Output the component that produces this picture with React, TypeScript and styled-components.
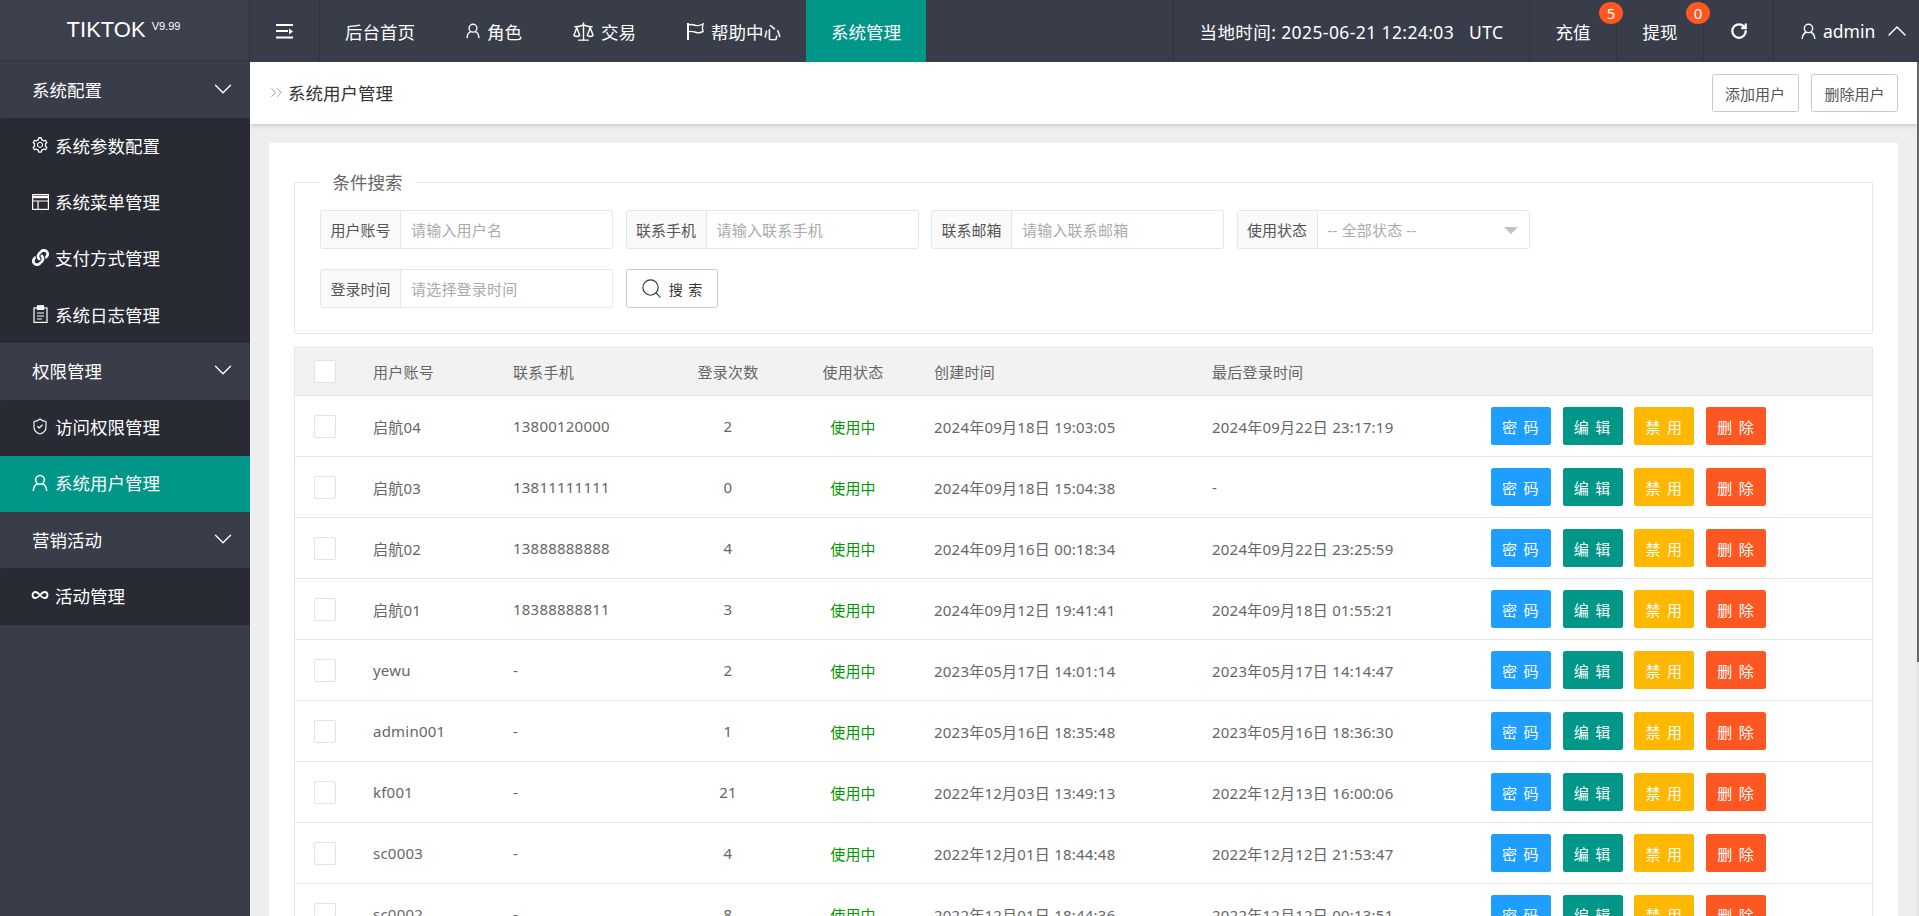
import styled, { createGlobalStyle } from "styled-components";
import { ChevronDown, ChevronUp, ChevronsRight, Infinity as InfinityIcon, RotateCw, Scale, Search, ShieldCheck } from "lucide-react";
import { AiOutlineSetting } from "react-icons/ai";
import { FaLink } from "react-icons/fa";
import type { ReactNode } from "react";

const GlobalStyle = createGlobalStyle`
  html, body { margin: 0; padding: 0; height: 100%; overflow: hidden; }
  body { font-family: "Noto Sans", "Noto Sans CJK SC", sans-serif; font-size: 15px; color: #666; }
  #root { height: 100%; }
  * { box-sizing: border-box; }
`;

const Page = styled.div`
  display: grid;
  grid-template-rows: 62px 1fr;
  height: 916px;
  overflow: hidden;
`;

const Header = styled.header`
  display: flex;
  background: #393d49;
  color: #fff;
  font-size: 17.5px;
`;

const Logo = styled.div`
  width: 250px;
  height: 61px;
  flex: none;
  display: flex;
  justify-content: center;
  padding-right: 2px;
  gap: 6px;
  align-items: center;
  background: #3c404d;
  border-right: 1px solid #2f333e;
  border-bottom: 1px solid #2f333e;
  font-size: 22px;
  font-family: "Liberation Sans", sans-serif;
`;

const LogoVersion = styled.sup`
  font-size: 11px;
  margin-top: -8px;
  line-height: 1;
  vertical-align: top;
`;

const Toggle = styled.div`
  width: 70px;
  flex: none;
  display: flex;
  align-items: center;
  justify-content: center;
  border-right: 1px solid #2f333e;
`;

const Nav = styled.nav`
  display: flex;
  flex: 1;
`;

const NavItem = styled.div<{ $active?: boolean }>`
  display: flex;
  align-items: center;
  gap: 6px;
  padding: 0 25px;
  white-space: nowrap;
  background: ${(p) => (p.$active ? "#009688" : "transparent")};
`;

const HeadCell = styled.div<{ $w: number }>`
  position: relative;
  width: ${(p) => p.$w}px;
  flex: none;
  display: flex;
  align-items: center;
  justify-content: center;
  gap: 6px;
  white-space: pre;
  border-left: 1px solid #2f333e;
`;

const TimeCell = styled(HeadCell)`
  letter-spacing: 0.4px;
`;

const UserCell = styled(HeadCell)`
  justify-content: flex-start;
  padding-left: 26px;
  gap: 6px;
`;

const Badge = styled.span`
  position: absolute;
  top: 2px;
  right: -7px;
  width: 24px;
  height: 22px;
  border-radius: 50%;
  background: #ff5722;
  color: #fff;
  font-size: 15px;
  line-height: 22px;
  text-align: center;
  z-index: 2;
`;

const Body = styled.div`
  display: flex;
  min-height: 0;
`;

const Sidebar = styled.aside`
  width: 250px;
  flex: none;
  background: #393d49;
  color: #fff;
  font-size: 17.5px;
`;

const Group = styled.div`
  height: 56.25px;
  display: flex;
  align-items: center;
  justify-content: space-between;
  padding: 0 12px 2px 32px;
`;

const SubList = styled.div`
  background: #282b33;
  border-radius: 3px 3px 0 0;
`;

const SubItem = styled.div<{ $active?: boolean }>`
  height: 56.25px;
  display: flex;
  align-items: center;
  gap: 6px;
  padding: 0 0 2px 31px;
  background: ${(p) => (p.$active ? "#009688" : "transparent")};
`;

const IconBox = styled.span`
  width: 18px;
  height: 18px;
  flex: none;
  display: inline-flex;
  align-items: center;
  justify-content: center;
`;

const Main = styled.main`
  flex: 1;
  min-width: 0;
  overflow: hidden;
  background: #eee;
`;

const ScrollRail = styled.div`
  width: 2px;
  flex: none;
  background: #e4e4e4;
`;

const ScrollThumb = styled.div`
  height: 600px;
  background: #666;
`;

const TitleBar = styled.div`
  height: 62px;
  display: flex;
  align-items: center;
  justify-content: space-between;
  padding: 0 19px 0 17px;
  background: #fff;
  box-shadow: 0 1px 5px rgba(0, 0, 0, 0.2);
`;

const Title = styled.div`
  display: flex;
  align-items: center;
  gap: 2px;
  padding-bottom: 2px;
  font-size: 17.5px;
  color: #333;
`;

const TitleActions = styled.div`
  display: flex;
  gap: 12.5px;
`;

const GhostButton = styled.button`
  height: 38px;
  width: 87px;
  padding: 0;
  border: 1px solid #c9c9c9;
  border-radius: 2.5px;
  background: #fff;
  color: #555;
  font: inherit;
  font-size: 15px;
`;

const Card = styled.section`
  margin: 19px 19px 0;
  padding: 25px 25px 40px;
  background: #fff;
`;

const SearchBox = styled.fieldset`
  margin: 0;
  padding: 14px 25px 25px;
  min-width: 0;
  border: 1px solid #e6e6e6;
  border-radius: 1px;
`;

const Legend = styled.legend`
  padding: 0 12.5px;
  font-size: 17.5px;
  line-height: 28px;
  color: #666;
`;

const FormGrid = styled.div`
  display: flex;
  flex-wrap: wrap;
  gap: 20px 12.5px;
  max-width: 1240px;
`;

const Field = styled.label`
  display: flex;
  width: 293px;
  height: 39px;
  border: 1px solid #e6e6e6;
  border-radius: 2.5px;
`;

const FieldLabel = styled.span`
  width: 80px;
  flex: none;
  display: flex;
  align-items: center;
  justify-content: center;
  background: #fafafa;
  border-right: 1px solid #e6e6e6;
  color: #555;
`;

const FieldInput = styled.input`
  flex: 1;
  min-width: 0;
  border: 0;
  outline: 0;
  padding: 0 10px;
  font: inherit;
  font-size: 15px;
  letter-spacing: 0.2px;
  background: transparent;
  &::placeholder { color: #aaa; opacity: 1; }
`;

const Caret = styled.span`
  position: absolute;
  right: 11px;
  top: 16px;
  border-left: 7px solid transparent;
  border-right: 7px solid transparent;
  border-top: 7px solid #c2c2c2;
`;

const SelectField = styled(Field)`
  position: relative;
`;

const SearchButton = styled.button`
  display: flex;
  align-items: center;
  justify-content: center;
  gap: 6px;
  width: 92px;
  height: 39px;
  padding: 0;
  border: 1px solid #c9c9c9;
  border-radius: 2.5px;
  background: #fff;
  color: #333;
  font: inherit;
  font-size: 14px;
  letter-spacing: 1px;
`;

const Table = styled.div`
  margin-top: 13px;
  border: solid #e6e6e6;
  border-width: 1px 1px 0;
`;

const columns = "59px 140px 171px 126px 124px 278px 279px 1fr";

const HeadRow = styled.div`
  display: grid;
  grid-template-columns: ${columns};
  height: 48px;
  align-items: center;
  background: #f2f2f2;
  border-bottom: 1px solid #e6e6e6;
`;

const Row = styled.div`
  display: grid;
  grid-template-columns: ${columns};
  height: 61px;
  align-items: center;
  border-bottom: 1px solid #e6e6e6;
`;

const Cell = styled.div<{ $center?: boolean; $green?: boolean }>`
  padding: 0 19px;
  white-space: nowrap;
  letter-spacing: 0.22px;
  text-align: ${(p) => (p.$center ? "center" : "left")};
  color: ${(p) => (p.$green ? "#090" : "#666")};
`;

const CheckBox = styled.span`
  display: block;
  width: 22px;
  height: 23px;
  background: #fff;
  border: 1px solid #e2e2e2;
  border-radius: 2px;
`;

const Actions = styled.div`
  display: flex;
  gap: 11.7px;
  padding-left: 19px;
`;

const ActionButton = styled.button<{ $color: string }>`
  width: 60px;
  height: 38px;
  padding: 0;
  border: 0;
  border-radius: 2.5px;
  background: ${(p) => p.$color};
  color: #fff;
  font: inherit;
  font-size: 15px;
  letter-spacing: 1.3px;
`;

function UserIcon({ size = 18 }: { size?: number }) {
  return (
    <svg width={size} height={size} viewBox="0 0 18 18" fill="none" stroke="currentColor" strokeWidth="1.5">
      <circle cx="9" cy="5.8" r="4.4" />
      <path d="M2.3 17c.2-4 2.2-6.4 4.2-7.2M15.7 17c-.2-4-2.2-6.4-4.2-7.2" />
    </svg>
  );
}

function FoldIcon() {
  return (
    <svg width="17" height="15" viewBox="0 0 17 15" fill="#fff">
      <rect width="17" height="2" />
      <rect y="6" width="12" height="2" />
      <path d="M13 4.500l4 3-4 3z" />
      <rect y="12.500" width="17" height="2" />
    </svg>
  );
}

function FlagIcon() {
  return (
    <svg width="19" height="19" viewBox="0 0 19 19" fill="none" stroke="currentColor" strokeWidth="1.4">
      <path d="M2 1v17" strokeWidth="2" />
      <path d="M2.500 3c4-1.800 6 1 9.500.6 1.800-.2 3.500-.8 5-1.600-.8 2.500-.8 5 0 7.500-2 1-3.800 1.400-5.500 1.200-3-.4-5.500-2.400-9-.9" />
    </svg>
  );
}

function WindowIcon() {
  return (
    <svg width="17" height="16" viewBox="0 0 17 16" fill="none" stroke="currentColor" strokeWidth="1.2">
      <rect x=".6" y=".6" width="15.800" height="14.800" />
      <path d="M.6 3h15.800" strokeWidth="2.400" />
      <path d="M.6 7h15.800M6 7v8" />
    </svg>
  );
}

function ClipIcon() {
  return (
    <svg width="15" height="18" viewBox="0 0 15 18" fill="none" stroke="currentColor" strokeWidth="1.2">
      <rect x="1" y="3" width="13" height="14.400" />
      <rect x="4.500" y=".8" width="6" height="3.600" fill="currentColor" />
      <path d="M4 8h7M4 11h7M4 14h5" />
    </svg>
  );
}

type Menu = { title: string; items: { icon: ReactNode; label: string; active?: boolean }[] };

const menus: Menu[] = [
  {
    title: "系统配置",
    items: [
      { icon: <AiOutlineSetting size={22} />, label: "系统参数配置" },
      { icon: <WindowIcon />, label: "系统菜单管理" },
      { icon: <FaLink size={17} />, label: "支付方式管理" },
      { icon: <ClipIcon />, label: "系统日志管理" },
    ],
  },
  {
    title: "权限管理",
    items: [
      { icon: <ShieldCheck size={21} strokeWidth={1.5} />, label: "访问权限管理" },
      { icon: <UserIcon />, label: "系统用户管理", active: true },
    ],
  },
  {
    title: "营销活动",
    items: [{ icon: <InfinityIcon size={18} strokeWidth={2.4} />, label: "活动管理" }],
  },
];

const users = [
  ["启航04", "13800120000", "2", "2024年09月18日 19:03:05", "2024年09月22日 23:17:19"],
  ["启航03", "13811111111", "0", "2024年09月18日 15:04:38", "-"],
  ["启航02", "13888888888", "4", "2024年09月16日 00:18:34", "2024年09月22日 23:25:59"],
  ["启航01", "18388888811", "3", "2024年09月12日 19:41:41", "2024年09月18日 01:55:21"],
  ["yewu", "-", "2", "2023年05月17日 14:01:14", "2023年05月17日 14:14:47"],
  ["admin001", "-", "1", "2023年05月16日 18:35:48", "2023年05月16日 18:36:30"],
  ["kf001", "-", "21", "2022年12月03日 13:49:13", "2022年12月13日 16:00:06"],
  ["sc0003", "-", "4", "2022年12月01日 18:44:48", "2022年12月12日 21:53:47"],
  ["sc0002", "-", "8", "2022年12月01日 18:44:36", "2022年12月12日 00:13:51"],
];

function App() {
  return (
    <>
      <GlobalStyle />
      <Page>
        <Header>
          <Logo>
            TIKTOK <LogoVersion>V9.99</LogoVersion>
          </Logo>
          <Toggle>
            <FoldIcon />
          </Toggle>
          <Nav>
            <NavItem>后台首页</NavItem>
            <NavItem>
              <UserIcon size={16} />
              角色
            </NavItem>
            <NavItem>
              <Scale size={23} strokeWidth={1.5} />
              交易
            </NavItem>
            <NavItem>
              <FlagIcon />
              帮助中心
            </NavItem>
            <NavItem $active>系统管理</NavItem>
          </Nav>
          <TimeCell $w={356}>{"当地时间: 2025-06-21 12:24:03   UTC"}</TimeCell>
          <HeadCell $w={87}>
            充值
            <Badge>5</Badge>
          </HeadCell>
          <HeadCell $w={87}>
            提现
            <Badge>0</Badge>
          </HeadCell>
          <HeadCell $w={70}>
            <RotateCw size={18} strokeWidth={3} />
          </HeadCell>
          <UserCell $w={146}>
            <UserIcon size={17} />
            admin
            <ChevronUp size={32} strokeWidth={1.1} />
          </UserCell>
        </Header>
        <Body>
          <Sidebar>
            {menus.map((menu) => (
              <div key={menu.title}>
                <Group>
                  {menu.title}
                  <ChevronDown size={30} strokeWidth={1.1} />
                </Group>
                <SubList>
                  {menu.items.map((item) => (
                    <SubItem key={item.label} $active={item.active}>
                      <IconBox>{item.icon}</IconBox>
                      {item.label}
                    </SubItem>
                  ))}
                </SubList>
              </div>
            ))}
          </Sidebar>
          <Main>
            <TitleBar>
              <Title>
                <ChevronsRight size={19} color="#999" strokeWidth={1.2} />
                系统用户管理
              </Title>
              <TitleActions>
                <GhostButton>添加用户</GhostButton>
                <GhostButton>删除用户</GhostButton>
              </TitleActions>
            </TitleBar>
            <Card>
              <SearchBox>
                <Legend>条件搜索</Legend>
                <FormGrid>
                  <Field>
                    <FieldLabel>用户账号</FieldLabel>
                    <FieldInput placeholder="请输入用户名" />
                  </Field>
                  <Field>
                    <FieldLabel>联系手机</FieldLabel>
                    <FieldInput placeholder="请输入联系手机" />
                  </Field>
                  <Field>
                    <FieldLabel>联系邮箱</FieldLabel>
                    <FieldInput placeholder="请输入联系邮箱" />
                  </Field>
                  <SelectField>
                    <FieldLabel>使用状态</FieldLabel>
                    <FieldInput placeholder="-- 全部状态 --" readOnly />
                    <Caret />
                  </SelectField>
                  <Field>
                    <FieldLabel>登录时间</FieldLabel>
                    <FieldInput placeholder="请选择登录时间" />
                  </Field>
                  <SearchButton>
                    <Search size={23} strokeWidth={1.2} />
                    搜 索
                  </SearchButton>
                </FormGrid>
              </SearchBox>
              <Table>
                <HeadRow>
                  <Cell>
                    <CheckBox />
                  </Cell>
                  <Cell>用户账号</Cell>
                  <Cell>联系手机</Cell>
                  <Cell $center>登录次数</Cell>
                  <Cell $center>使用状态</Cell>
                  <Cell>创建时间</Cell>
                  <Cell>最后登录时间</Cell>
                  <Cell />
                </HeadRow>
                {users.map(([name, phone, count, created, last]) => (
                  <Row key={name}>
                    <Cell>
                      <CheckBox />
                    </Cell>
                    <Cell>{name}</Cell>
                    <Cell>{phone}</Cell>
                    <Cell $center>{count}</Cell>
                    <Cell $center $green>
                      使用中
                    </Cell>
                    <Cell>{created}</Cell>
                    <Cell>{last}</Cell>
                    <Actions>
                      <ActionButton $color="#1e9fff">密 码</ActionButton>
                      <ActionButton $color="#009688">编 辑</ActionButton>
                      <ActionButton $color="#ffb800">禁 用</ActionButton>
                      <ActionButton $color="#ff5722">删 除</ActionButton>
                    </Actions>
                  </Row>
                ))}
              </Table>
            </Card>
          </Main>
          <ScrollRail>
            <ScrollThumb />
          </ScrollRail>
        </Body>
      </Page>
    </>
  );
}

export default App;
